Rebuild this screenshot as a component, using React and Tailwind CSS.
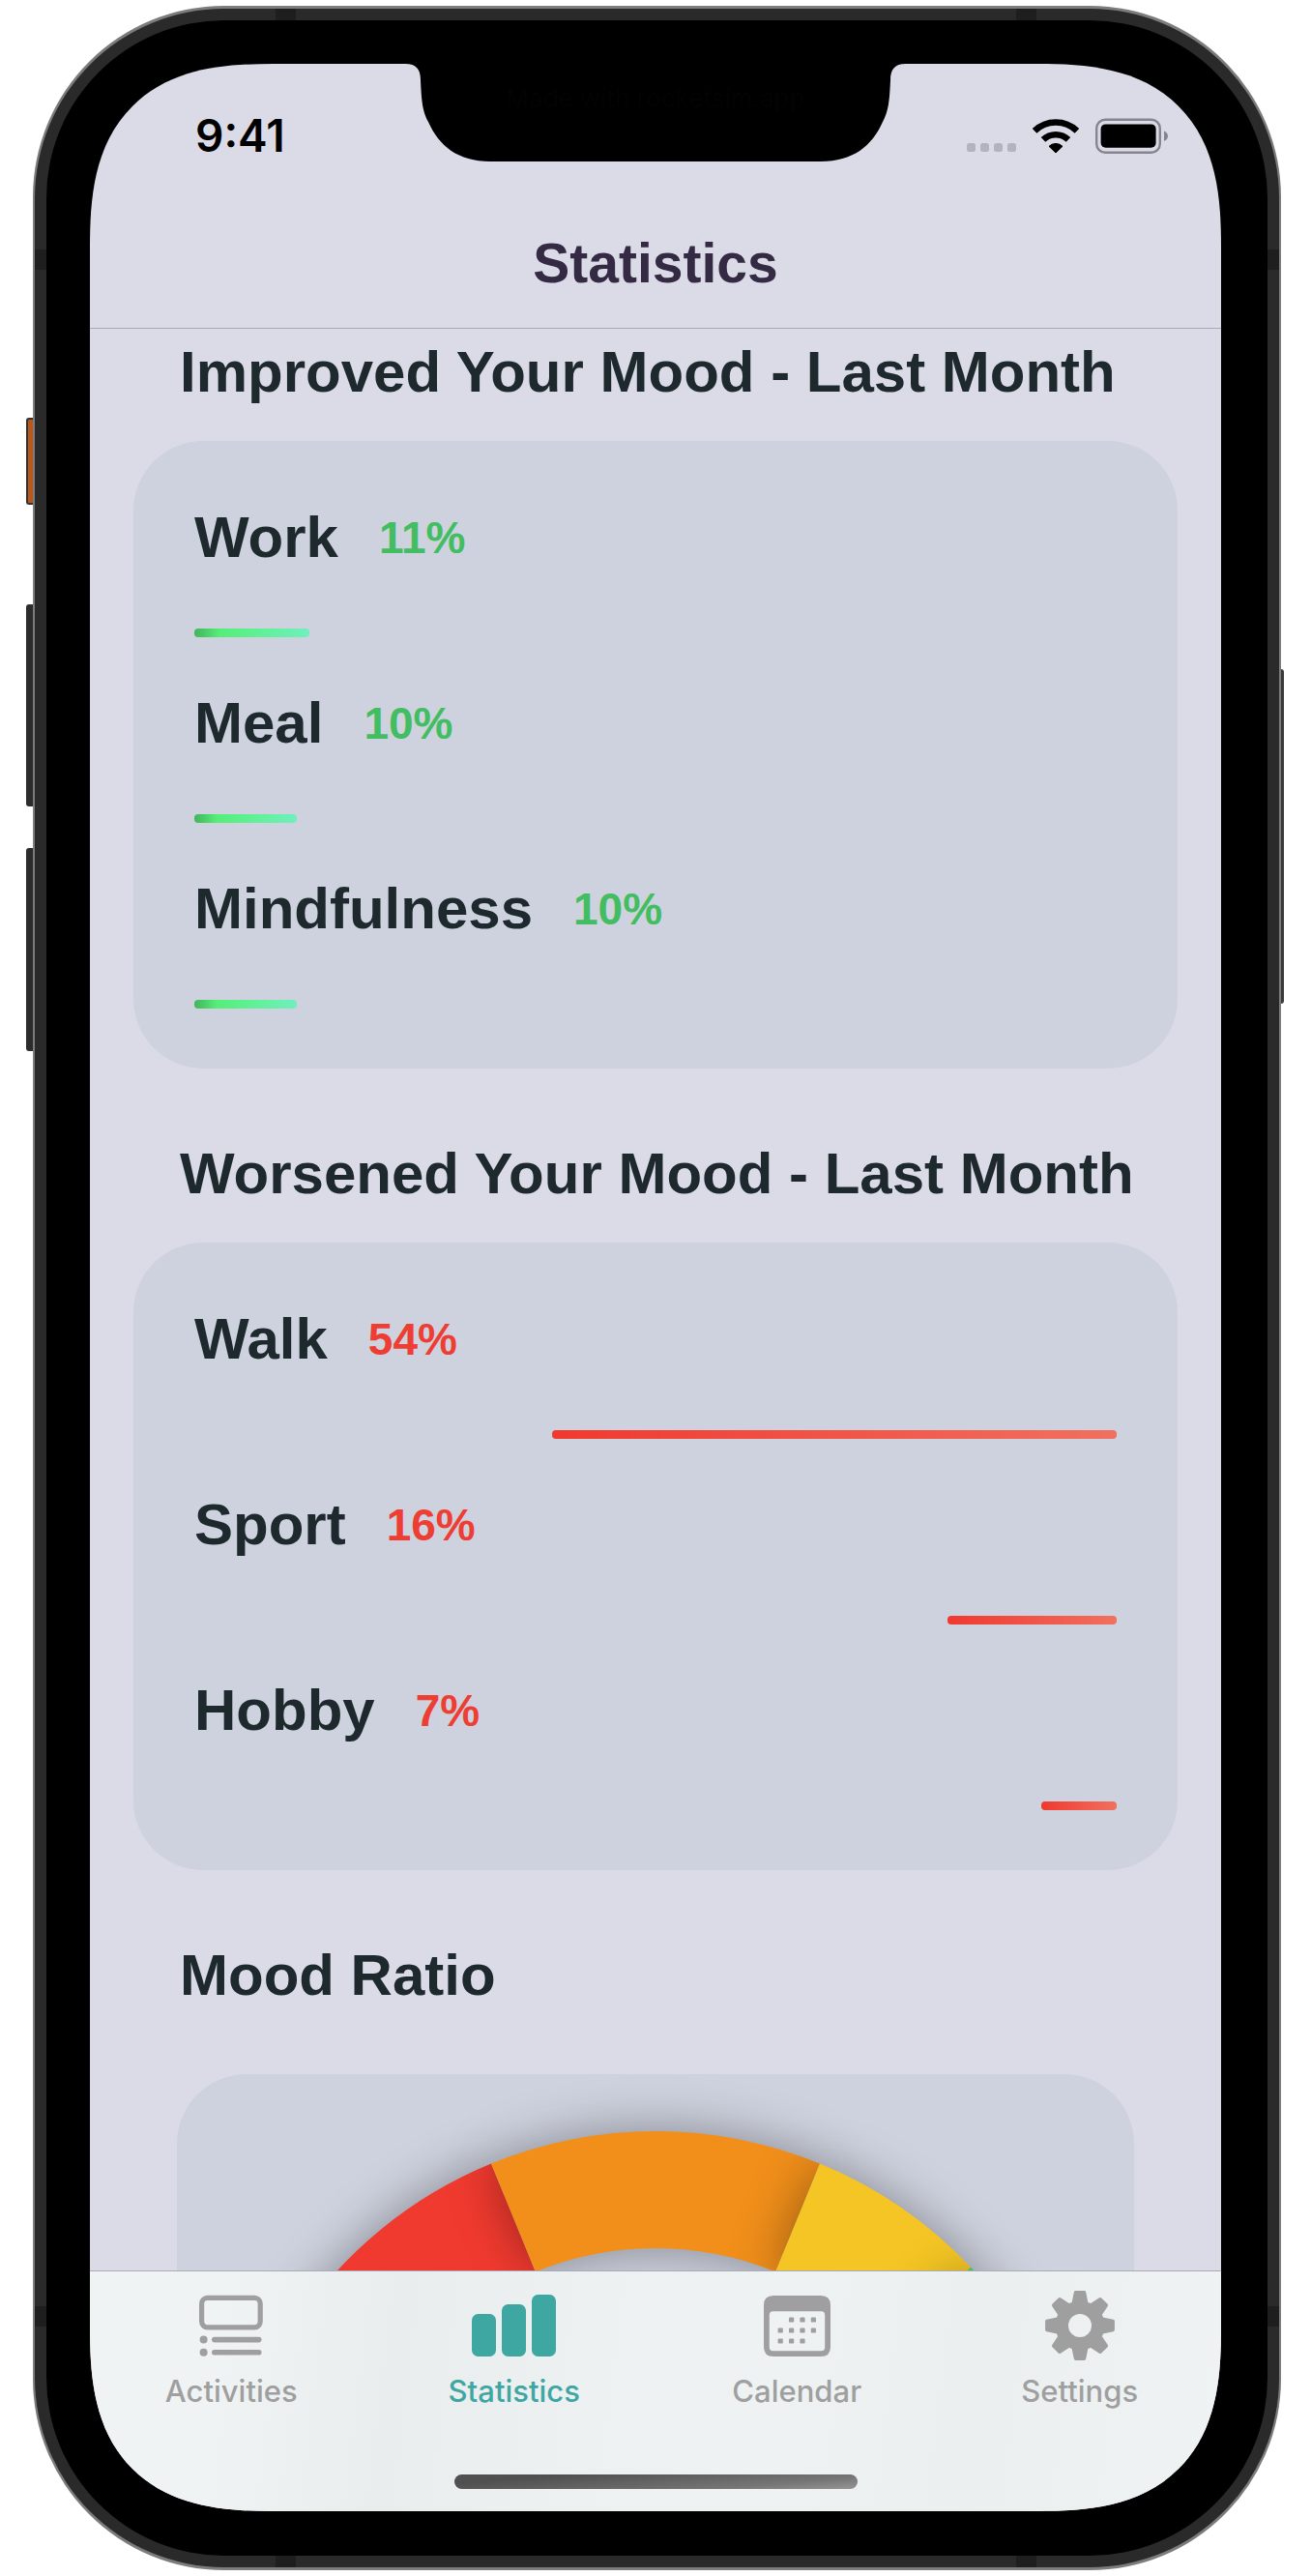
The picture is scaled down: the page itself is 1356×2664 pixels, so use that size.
import React from "react";

const improved = [
  { name: "Work", percent: 11, share: 12.5 },
  { name: "Meal", percent: 10, share: 11.1 },
  { name: "Mindfulness", percent: 10, share: 11.1 },
];

const worsened = [
  { name: "Walk", percent: 54, share: 61.2 },
  { name: "Sport", percent: 16, share: 18.3 },
  { name: "Hobby", percent: 7, share: 8.2 },
];

function Notch() {
  return (
    <div className="absolute inset-x-0 top-0 z-10 flex justify-center">
      <svg viewBox="0 0 518 102" className="-mt-px h-[102px] w-[518px] fill-black" aria-hidden="true">
        <path d="M0 0V1C12 1 16 7 16 18C17 40 18 50 24 61C35 86 55 102 88 102H430C463 102 483 86 494 61C500 50 501 40 502 18C502 7 506 1 518 1V0Z" />
      </svg>
      <p className="absolute top-5 font-['Inter'] text-[26px] leading-8 text-[#030303]">Made with rocketsim.app</p>
    </div>
  );
}

function StatusIcons() {
  return (
    <div className="flex items-end gap-[17px]">
      <svg viewBox="0 0 51 10" className="mb-px h-[10px] w-[51px] fill-[#b4b3bd]" aria-hidden="true">
        <rect x="0" width="9" height="9" rx="2.5" />
        <rect x="14" width="9" height="9" rx="2.5" />
        <rect x="28" width="9" height="9" rx="2.5" />
        <rect x="42" width="9" height="9" rx="2.5" />
      </svg>
      <svg viewBox="0 0 48 37" className="h-[37px] w-12" aria-hidden="true">
        <g fill="none" stroke="#000" strokeWidth="6.6">
          <path d="M2.1 13.4A31.5 31.5 0 0 1 45.9 13.4" />
          <path d="M11 22.4A19 19 0 0 1 37 22.4" />
        </g>
        <path d="M24 36L17 29.3A10 10 0 0 1 31 29.3Z" stroke="#000" strokeLinejoin="round" />
      </svg>
      <svg viewBox="0 0 75 37" className="h-[37px] w-[75px]" aria-hidden="true">
        <rect x="1.2" y="1.7" width="65.6" height="34" rx="9" fill="none" stroke="#85848f" strokeWidth="2.4" />
        <rect x="5.6" y="6.4" width="57" height="24.4" rx="5" />
        <path d="M71 13.5C73.7 14.8 75 16.5 75 18.7C75 20.9 73.7 22.6 71 24Z" fill="#85848f" />
      </svg>
    </div>
  );
}

function Heading({ children }) {
  return <h2 className="px-12 text-[60px] font-bold leading-[74px] whitespace-nowrap">{children}</h2>;
}

function ActivityCard({ items, good }) {
  return (
    <ul className="flex flex-col gap-[52px] rounded-[72px] bg-[#ced2de] px-[63px] pt-[63px] pb-[62px]">
      {items.map(({ name, percent, share }) => (
        <li key={name} className="flex flex-col gap-[57px]">
          <div className="flex items-center gap-[42px]">
            <span className="text-[60px] font-bold leading-[74px]">{name}</span>
            <span
              className={
                good
                  ? "text-[46px] font-bold leading-[52px] text-[#43bd62]"
                  : "text-[46px] font-bold leading-[52px] text-[#ee3d33]"
              }
            >
              {percent}%
            </span>
          </div>
          <div
            className={
              good
                ? "h-[9px] rounded-[4px] bg-[linear-gradient(90deg,#41b45c_0%,#55ee78_22%,#62f09a_60%,#70efbc_100%)]"
                : "h-[9px] self-end rounded-[4px] bg-[linear-gradient(90deg,#f0392f,#f1705f)]"
            }
            style={{ width: `${share}%` }}
          />
        </li>
      ))}
    </ul>
  );
}

const OUTER = 448;
const INNER = 327;

function segment(from, to) {
  const at = (radius, degrees) => {
    const a = (degrees * Math.PI) / 180;
    return `${448 + radius * Math.sin(a)} ${448 - radius * Math.cos(a)}`;
  };
  return `M${at(OUTER, from)}A${OUTER} ${OUTER} 0 0 1 ${at(OUTER, to)}L${at(INNER, to)}A${INNER} ${INNER} 0 0 0 ${at(INNER, from)}Z`;
}

const gauge = [
  { color: "#f13a2f", d: segment(-90, -22.3) },
  { color: "#f18f1a", d: segment(-22.3, 22.3) },
  { color: "#f4c524", d: segment(22.3, 46.7) },
  { color: "#3fc463", d: segment(46.7, 90) },
];

function MoodGauge() {
  return (
    <svg viewBox="0 0 896 448" className="w-[896px] max-w-full overflow-visible" role="img" aria-label="Mood ratio">
      {gauge.map(({ color, d }) => (
        <path key={color} d={d} fill={color} className="[filter:drop-shadow(0_0_26px_rgba(0,0,0,0.36))]" />
      ))}
    </svg>
  );
}

function ActivitiesIcon() {
  return (
    <svg viewBox="0 0 66 72" className="h-[72px] w-[66px]" aria-hidden="true">
      <rect x="2.6" y="7.4" width="60.6" height="30.4" rx="6" fill="none" stroke="currentColor" strokeWidth="5.2" />
      <g fill="currentColor">
        <circle cx="4.6" cy="50.6" r="4" />
        <circle cx="4.6" cy="63.8" r="4" />
        <rect x="13" y="47.8" width="51.5" height="5.6" rx="2.8" />
        <rect x="13" y="61" width="51.5" height="5.6" rx="2.8" />
      </g>
    </svg>
  );
}

function StatisticsIcon() {
  return (
    <svg viewBox="0 0 87 72" className="h-[72px] w-[87px] fill-current" aria-hidden="true">
      <rect x="0" y="24" width="25" height="44" rx="6.5" />
      <rect x="31" y="14" width="25" height="54" rx="6.5" />
      <rect x="62" y="4" width="25" height="64" rx="6.5" />
    </svg>
  );
}

const calendarDots = [
  [28.6, 30], [40, 30], [51.4, 30],
  [17.2, 41], [28.6, 41], [40, 41], [51.4, 41],
  [17.2, 52], [28.6, 52], [40, 52],
];

function CalendarIcon() {
  return (
    <svg viewBox="0 0 69 72" className="h-[72px] w-[69px] fill-current" aria-hidden="true">
      <path
        fillRule="evenodd"
        d="M10 5H59Q69 5 69 15V58Q69 68 59 68H10Q0 68 0 58V15Q0 5 10 5ZM9.500 21.200Q5.800 21.200 5.800 25V58.500Q5.800 62.300 9.500 62.300H59.500Q63.200 62.300 63.200 58.500V25Q63.200 21.200 59.500 21.200Z"
      />
      {calendarDots.map(([x, y]) => (
        <rect key={`${x}-${y}`} x={x - 2.6} y={y - 2.6} width="5.2" height="5.2" rx="1.2" />
      ))}
    </svg>
  );
}

function SettingsIcon() {
  return (
    <svg viewBox="-36 -36 72 72" className="size-[72px]" fill="currentColor" aria-hidden="true">
      {[0, 45, 90, 135, 180, 225, 270, 315].map((angle) => (
        <path
          key={angle}
          transform={`rotate(${angle})`}
          d="M-4.500 -34.200H4.500L7 -22H-7Z"
          stroke="currentColor"
          strokeWidth="3.4"
          strokeLinejoin="round"
        />
      ))}
      <path fillRule="evenodd" d="M0 -25.500A25.500 25.500 0 0 1 0 25.500A25.500 25.500 0 0 1 0 -25.500ZM0 -12A12 12 0 0 0 0 12A12 12 0 0 0 0 -12Z" />
    </svg>
  );
}

const tabs = [
  { label: "Activities", Icon: ActivitiesIcon },
  { label: "Statistics", Icon: StatisticsIcon, active: true },
  { label: "Calendar", Icon: CalendarIcon },
  { label: "Settings", Icon: SettingsIcon },
];

function TabBar() {
  return (
    <footer className="relative border-t border-[#a9abb6] bg-[linear-gradient(97deg,#eff3f4_0%,#eff3f4_12%,#e9edee_27%,#edf1f2_45%,#eef2f3_60%,#ebeff0_78%,#eff3f4_100%)] pb-[23px]">
      <nav className="grid grid-cols-4 pt-5" aria-label="Main">
        {tabs.map(({ label, Icon, active }) => (
          <button
            key={label}
            type="button"
            aria-current={active ? "page" : undefined}
            className={
              active
                ? "flex flex-col items-center gap-[14px] text-[#3fa7a2]"
                : "flex flex-col items-center gap-[14px] text-[#9f9f9f]"
            }
          >
            <Icon />
            <span className="font-['Inter'] text-[31px] font-medium leading-9">{label}</span>
          </button>
        ))}
      </nav>
      <div className="mx-auto mt-[68px] h-[15px] w-[417px] rounded-full bg-[linear-gradient(175deg,#505050_20%,#757575_75%,#959595_100%)]" />
    </footer>
  );
}

function AntennaBands() {
  return (
    <div aria-hidden="true">
      <span className="absolute top-0 left-[249px] h-3 w-[21px] bg-[#1e1e1e]" />
      <span className="absolute top-0 right-[251px] h-3 w-[21px] bg-[#1e1e1e]" />
      <span className="absolute bottom-0 left-[249px] h-3 w-[21px] bg-[#1e1e1e]" />
      <span className="absolute right-[251px] bottom-0 h-3 w-[21px] bg-[#1e1e1e]" />
      <span className="absolute top-[249px] left-0 h-[21px] w-3 bg-[#1e1e1e]" />
      <span className="absolute top-[249px] right-0 h-[21px] w-3 bg-[#1e1e1e]" />
      <span className="absolute bottom-[249px] left-0 h-[21px] w-3 bg-[#1e1e1e]" />
      <span className="absolute right-0 bottom-[249px] h-[21px] w-3 bg-[#1e1e1e]" />
    </div>
  );
}

function SideButtons() {
  return (
    <div aria-hidden="true">
      <span className="absolute top-[426px] -left-[7px] h-[90px] w-2 rounded-l-[3px] border-2 border-r-0 border-[#333] bg-[#b8581c]" />
      <span className="absolute top-[619px] -left-[7px] h-[209px] w-2 rounded-l-[3px] bg-[#2c2c2c]" />
      <span className="absolute top-[871px] -left-[7px] h-[210px] w-2 rounded-l-[3px] bg-[#2c2c2c]" />
      <span className="absolute top-[686px] -right-[3px] h-[346px] w-1 rounded-r-[3px] bg-[#3a3a3a]" />
    </div>
  );
}

export default function App() {
  return (
    <div className="h-screen bg-white pt-1.5 pr-[31px] pb-1.5 pl-[34px] font-['Liberation_Sans',sans-serif] text-[#1e292e]">
      <div className="relative h-full">
        <SideButtons />
        <div className="relative h-full rounded-[198px] bg-[#7c7c7c] px-[2px] py-[3px]">
          <div className="relative h-full overflow-hidden rounded-[196px] bg-[#2a2a2a] p-3">
            <AntennaBands />
            <div className="relative h-full rounded-[184px] bg-black pt-[45px] pr-12 pb-[46px] pl-[45px]">
              <div className="relative flex h-full flex-col overflow-hidden rounded-[150px] bg-[#dbdbe7] supports-[corner-shape:squircle]:rounded-[190px] supports-[corner-shape:squircle]:[corner-shape:superellipse(1.4)]">
                <Notch />
                <header className="border-b border-[#a9a8b6] pb-[9px]">
                  <div className="flex h-[148px] items-center justify-between pr-[55px] pl-[109px]">
                    <time className="font-['Inter'] text-[46px] font-semibold leading-none text-black">9:41</time>
                    <StatusIcons />
                  </div>
                  <h1 className="text-center text-[57px] font-bold leading-[116px] text-[#352a44]">Statistics</h1>
                </header>
                <main className="min-h-0 flex-1 overflow-hidden px-[45px] pt-2">
                  <section>
                    <Heading>Improved Your Mood - Last Month</Heading>
                    <div className="mt-[34px]">
                      <ActivityCard items={improved} good />
                    </div>
                  </section>
                  <section className="mt-[72px]">
                    <Heading>Worsened Your Mood - Last Month</Heading>
                    <div className="mt-[34px]">
                      <ActivityCard items={worsened} />
                    </div>
                  </section>
                  <section className="mt-[72px]">
                    <Heading>Mood Ratio</Heading>
                    <div className="mx-[45px] mt-[65px] flex justify-center rounded-[72px] bg-[#ced2de] pt-[59px] pb-16">
                      <MoodGauge />
                    </div>
                  </section>
                </main>
                <TabBar />
              </div>
            </div>
          </div>
        </div>
      </div>
    </div>
  );
}
